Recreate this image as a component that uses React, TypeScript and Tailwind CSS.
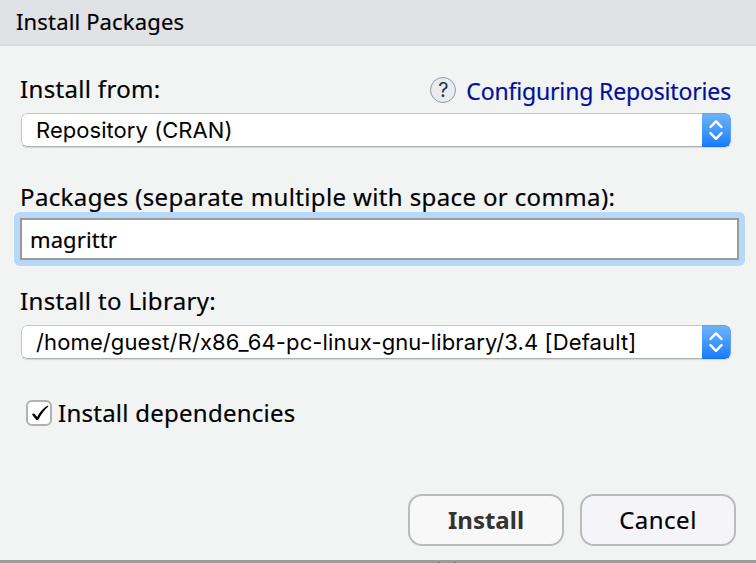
import type { ReactNode } from "react";

function Select({ value, className }: { value: string; className: string }) {
  return (
    <div className="ml-[21px] flex h-[34px] w-[710px] shrink-0 overflow-hidden rounded-[6px] bg-white shadow-[0_1px_1px_rgba(0,0,0,0.12)]">
      <div className="flex flex-1 items-center rounded-l-[6px] border border-r-0 border-[#c6c8c8] border-b-[#adafaf] pl-[14px] font-['Inter',sans-serif] text-[22px] leading-[32px] whitespace-nowrap text-black [-webkit-text-stroke:0px]">
        <span className={className}>{value}</span>
      </div>
      <div className="flex w-[29px] items-center justify-center rounded-r-[6px] border border-l-0 border-[#5aa5f2] border-b-[#1672ee] bg-gradient-to-b from-[#6cb3fa] to-[#147cfe]">
        <svg width="14" height="22" viewBox="0 0 14 22" fill="none" stroke="white" strokeWidth="2.4" strokeLinecap="round" strokeLinejoin="round">
          <path d="M1.5 8L7 2.4L12.5 8M1.5 14.2L7 19.8L12.5 14.2" />
        </svg>
      </div>
    </div>
  );
}

function Label({ children, className }: { children: ReactNode; className: string }) {
  return <div className={`h-[32px] shrink-0 pl-[20px] text-[24px] leading-[32px] whitespace-nowrap ${className}`}>{children}</div>;
}

export default function App() {
  return (
    <div className="flex h-[563px] w-[756px] flex-col overflow-hidden bg-[#f2f4f4] font-['Noto_Sans',sans-serif] text-black [-webkit-text-stroke:0.2px_currentColor]">
      <div className="flex h-[46px] shrink-0 items-center border-b-2 border-[#d8d9dc] bg-[#e1e2e6] pb-[2px] pl-[16px] text-[22px] leading-[30px] whitespace-nowrap">
        <span className="tracking-[0.15px]">Install Packages</span>
      </div>
      <div className="flex h-[67px] shrink-0 items-start justify-between pr-[25px]">
        <Label className="mt-[27px] tracking-[0.33px]">Install from:</Label>
        <div className="mt-[30px] flex items-start text-[#00109c]">
          <span className="mt-px mr-[10px] flex h-[26px] w-[26px] items-center justify-center rounded-full border border-[#8b9ca8] bg-[#e8ecf0] font-['Inter',sans-serif] text-[20px] leading-none text-[#26343f] [-webkit-text-stroke:0px]">?</span>
          <span className="text-[23px] leading-[30px] tracking-[-0.16px] whitespace-nowrap">Configuring Repositories</span>
        </div>
      </div>
      <Select value="Repository (CRAN)" className="tracking-[0.05px]" />
      <Label className="mt-[34px] tracking-[0.37px]">Packages (separate multiple with space or comma):</Label>
      <div className="mt-[-1px] ml-[14px] flex h-[54px] w-[731px] shrink-0 rounded-[6px] bg-[#b7d8f8] p-[6px]">
        <div className="flex flex-1 items-center border-2 border-[#999999] bg-white pl-[8px] text-[22px] leading-[30px]">
          <span className="tracking-[0.1px]">magrittr</span>
        </div>
      </div>
      <Label className="mt-[19px] mb-[8px] tracking-[0.34px]">Install to Library:</Label>
      <Select value="/home/guest/R/x86_64-pc-linux-gnu-library/3.4 [Default]" className="tracking-[0.12px]" />
      <div className="mt-[38px] ml-[26px] flex h-[32px] items-center">
        <span className="flex h-[26px] w-[26px] items-center justify-center rounded-[6px] border-2 border-[#b0b1b1] bg-white">
          <svg width="22" height="22" viewBox="0 0 22 22" className="shrink-0" fill="black">
            <path d="M4 12.6Q5 10.9 6.6 12L9.2 15Q12.5 8 19.2 3.7Q20.6 3.6 20.3 4.6Q14.2 9.8 10.6 17.6Q9.2 19 7.9 17.6Z" />
          </svg>
        </span>
        <span className="pl-[6px] text-[24px] leading-[32px] tracking-[0.25px]">Install dependencies</span>
      </div>
      <div className="mt-[65px] flex gap-4 pl-[408px]">
        <button className="h-[52px] w-[156px] rounded-[14px] border-2 border-[#babcbc] bg-[#f8f8f8] text-[24px] leading-[32px] font-bold text-[#333333] [-webkit-text-stroke:0px]">Install</button>
        <button className="h-[52px] w-[156px] rounded-[14px] border-2 border-[#babcbc] bg-[#f5f5f9] text-[24px] leading-[32px] tracking-[0.5px]">Cancel</button>
      </div>
      <div className="mt-auto flex h-[3px] shrink-0 items-end bg-[#9b9c9c] pl-[438px]">
        <div className="h-px w-[18px] border-x-2 border-[#707171]" />
      </div>
    </div>
  );
}
